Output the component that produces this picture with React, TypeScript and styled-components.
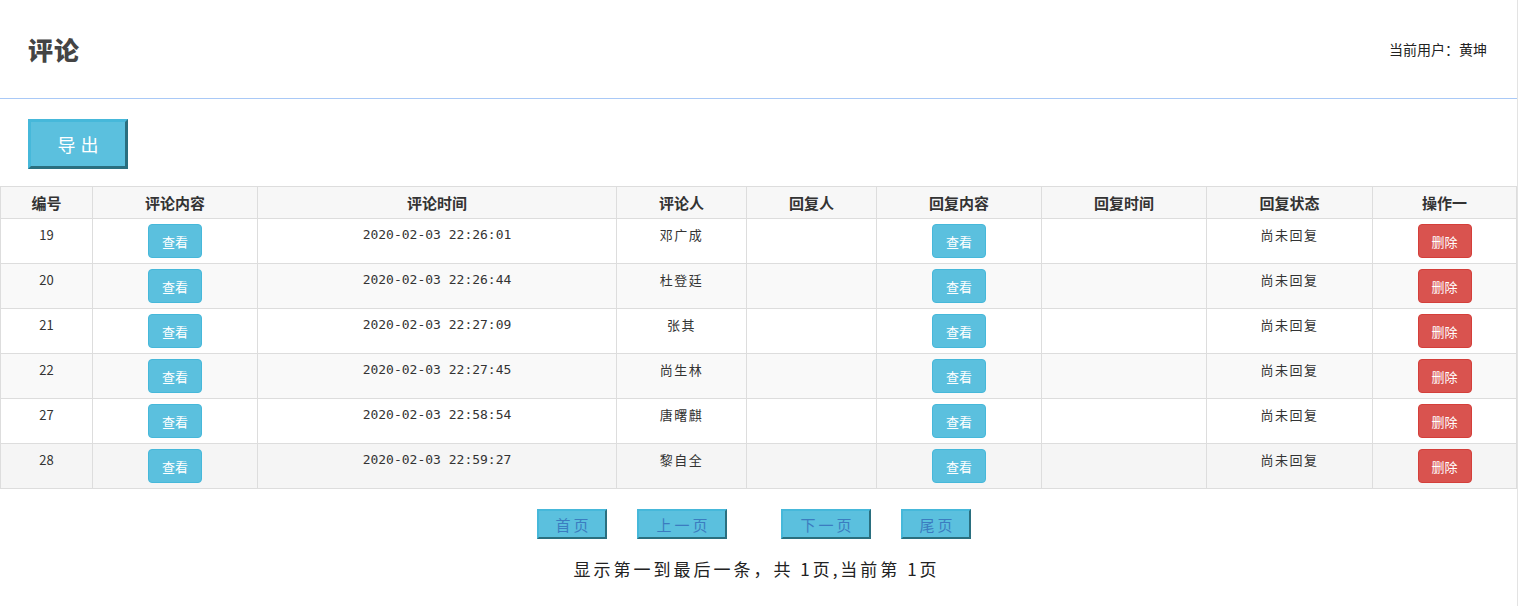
import styled, { createGlobalStyle } from "styled-components";

const GlobalStyles = createGlobalStyle`
  html, body {
    margin: 0;
    padding: 0;
    background: #fff;
  }
  body {
    font-family: "Noto Sans CJK SC", "Noto Sans", sans-serif;
    color: #333;
  }
`;

const Page = styled.div`
  width: 1517px;
  min-height: 606px;
  border-right: 1px solid #e3e3e3;
`;

const Header = styled.div`
  height: 98px;
  border-bottom: 1px solid #a9c9f7;
  display: flex;
  align-items: center;
  justify-content: space-between;
  padding: 0 30px 0 28px;
`;

const Title = styled.h1`
  margin: 0;
  font-size: 25px;
  font-weight: 900;
  color: #444;
  letter-spacing: 1px;
`;

const UserInfo = styled.div`
  font-size: 14px;
  color: #222;
`;

const Toolbar = styled.div`
  padding: 20px 28px 17px;
`;

const ExportButton = styled.button`
  display: block;
  width: 100px;
  height: 50px;
  background: #5bc0de;
  border: 3px solid;
  border-color: #46b8da #2a6f7f #2a6f7f #46b8da;
  color: #fff;
  font-family: "Noto Sans CJK SC", sans-serif;
  font-size: 18px;
  letter-spacing: 5px;
  padding: 0 0 0 5px;
`;

const Table = styled.table`
  width: 1516px;
  border-collapse: collapse;
  table-layout: fixed;
  border: 1px solid #ddd;
`;

const Th = styled.th`
  height: 31px;
  padding: 0;
  font-size: 15px;
  font-weight: 700;
  color: #333;
  background: #f7f7f7;
  border: 1px solid #ddd;
  text-align: center;
  vertical-align: middle;
`;

const Tr = styled.tr<{ $bg: string }>`
  background: ${({ $bg }) => $bg};
`;

const Td = styled.td<{ $mono?: boolean; $spaced?: boolean }>`
  height: 45px;
  padding: 5px 0 0;
  box-sizing: border-box;
  border: 1px solid #ddd;
  text-align: center;
  vertical-align: top;
  font-size: 13px;
  color: #333;
  font-family: ${({ $mono }) =>
    $mono ? '"DejaVu Sans Mono", monospace' : '"Noto Sans CJK SC", sans-serif'};
  letter-spacing: ${({ $spaced }) => ($spaced ? "1.5px" : "0")};
  line-height: 22px;
`;

const SmallButton = styled.button<{ $danger?: boolean }>`
  display: block;
  margin: 0 auto;
  width: 54px;
  height: 34px;
  border-radius: 4px;
  border: 1px solid ${({ $danger }) => ($danger ? "#d43f3a" : "#46b8da")};
  background: ${({ $danger }) => ($danger ? "#d9534f" : "#5bc0de")};
  color: #fff;
  font-family: "Noto Sans CJK SC", sans-serif;
  font-size: 13px;
  padding: 0;
`;

const Pager = styled.div`
  display: flex;
  justify-content: center;
  padding: 20px 9px 0 0;
`;

const PageButton = styled.button<{ $w: number; $gap: number }>`
  width: ${({ $w }) => $w}px;
  height: 30px;
  margin-right: ${({ $gap }) => $gap}px;
  background: #5bc0de;
  border: 2px solid;
  border-color: #46b8da #2a6f7f #2a6f7f #46b8da;
  color: #3b7cc0;
  font-family: "Noto Sans CJK SC", sans-serif;
  font-size: 15px;
  letter-spacing: 3px;
  padding: 0 0 0 3px;
`;

const Summary = styled.div`
  text-align: center;
  font-size: 17px;
  color: #222;
  margin-top: 17px;
  letter-spacing: 3px;
  padding-right: 4px;
`;

const rows = [
  { id: 19, time: "2020-02-03 22:26:01", name: "邓广成" },
  { id: 20, time: "2020-02-03 22:26:44", name: "杜登廷" },
  { id: 21, time: "2020-02-03 22:27:09", name: "张其" },
  { id: 22, time: "2020-02-03 22:27:45", name: "尚生林" },
  { id: 27, time: "2020-02-03 22:58:54", name: "唐曙麒" },
  { id: 28, time: "2020-02-03 22:59:27", name: "黎自全" },
];

const columns = [
  { label: "编号", w: 92 },
  { label: "评论内容", w: 165 },
  { label: "评论时间", w: 359 },
  { label: "评论人", w: 130 },
  { label: "回复人", w: 130 },
  { label: "回复内容", w: 165 },
  { label: "回复时间", w: 165 },
  { label: "回复状态", w: 166 },
  { label: "操作一", w: 144 },
];

export default function App() {
  return (
    <Page>
      <GlobalStyles />
      <Header>
        <Title>评论</Title>
        <UserInfo>当前用户：黄坤</UserInfo>
      </Header>
      <Toolbar>
        <ExportButton>导出</ExportButton>
      </Toolbar>
      <Table>
        <colgroup>
          {columns.map((c) => (
            <col key={c.label} style={{ width: c.w }} />
          ))}
        </colgroup>
        <thead>
          <tr>
            {columns.map((c) => (
              <Th key={c.label}>{c.label}</Th>
            ))}
          </tr>
        </thead>
        <tbody>
          {rows.map((r, i) => (
            <Tr
              key={r.id}
              $bg={i === rows.length - 1 ? "#f5f5f5" : i % 2 ? "#f9f9f9" : "#fff"}
            >
              <Td>{r.id}</Td>
              <Td>
                <SmallButton>查看</SmallButton>
              </Td>
              <Td $mono>{r.time}</Td>
              <Td $spaced>{r.name}</Td>
              <Td />
              <Td>
                <SmallButton>查看</SmallButton>
              </Td>
              <Td />
              <Td $spaced>尚未回复</Td>
              <Td>
                <SmallButton $danger>删除</SmallButton>
              </Td>
            </Tr>
          ))}
        </tbody>
      </Table>
      <Pager>
        <PageButton $w={70} $gap={30}>首页</PageButton>
        <PageButton $w={90} $gap={54}>上一页</PageButton>
        <PageButton $w={90} $gap={30}>下一页</PageButton>
        <PageButton $w={70} $gap={0}>尾页</PageButton>
      </Pager>
      <Summary>显示第一到最后一条，共 1页,当前第 1页</Summary>
    </Page>
  );
}
